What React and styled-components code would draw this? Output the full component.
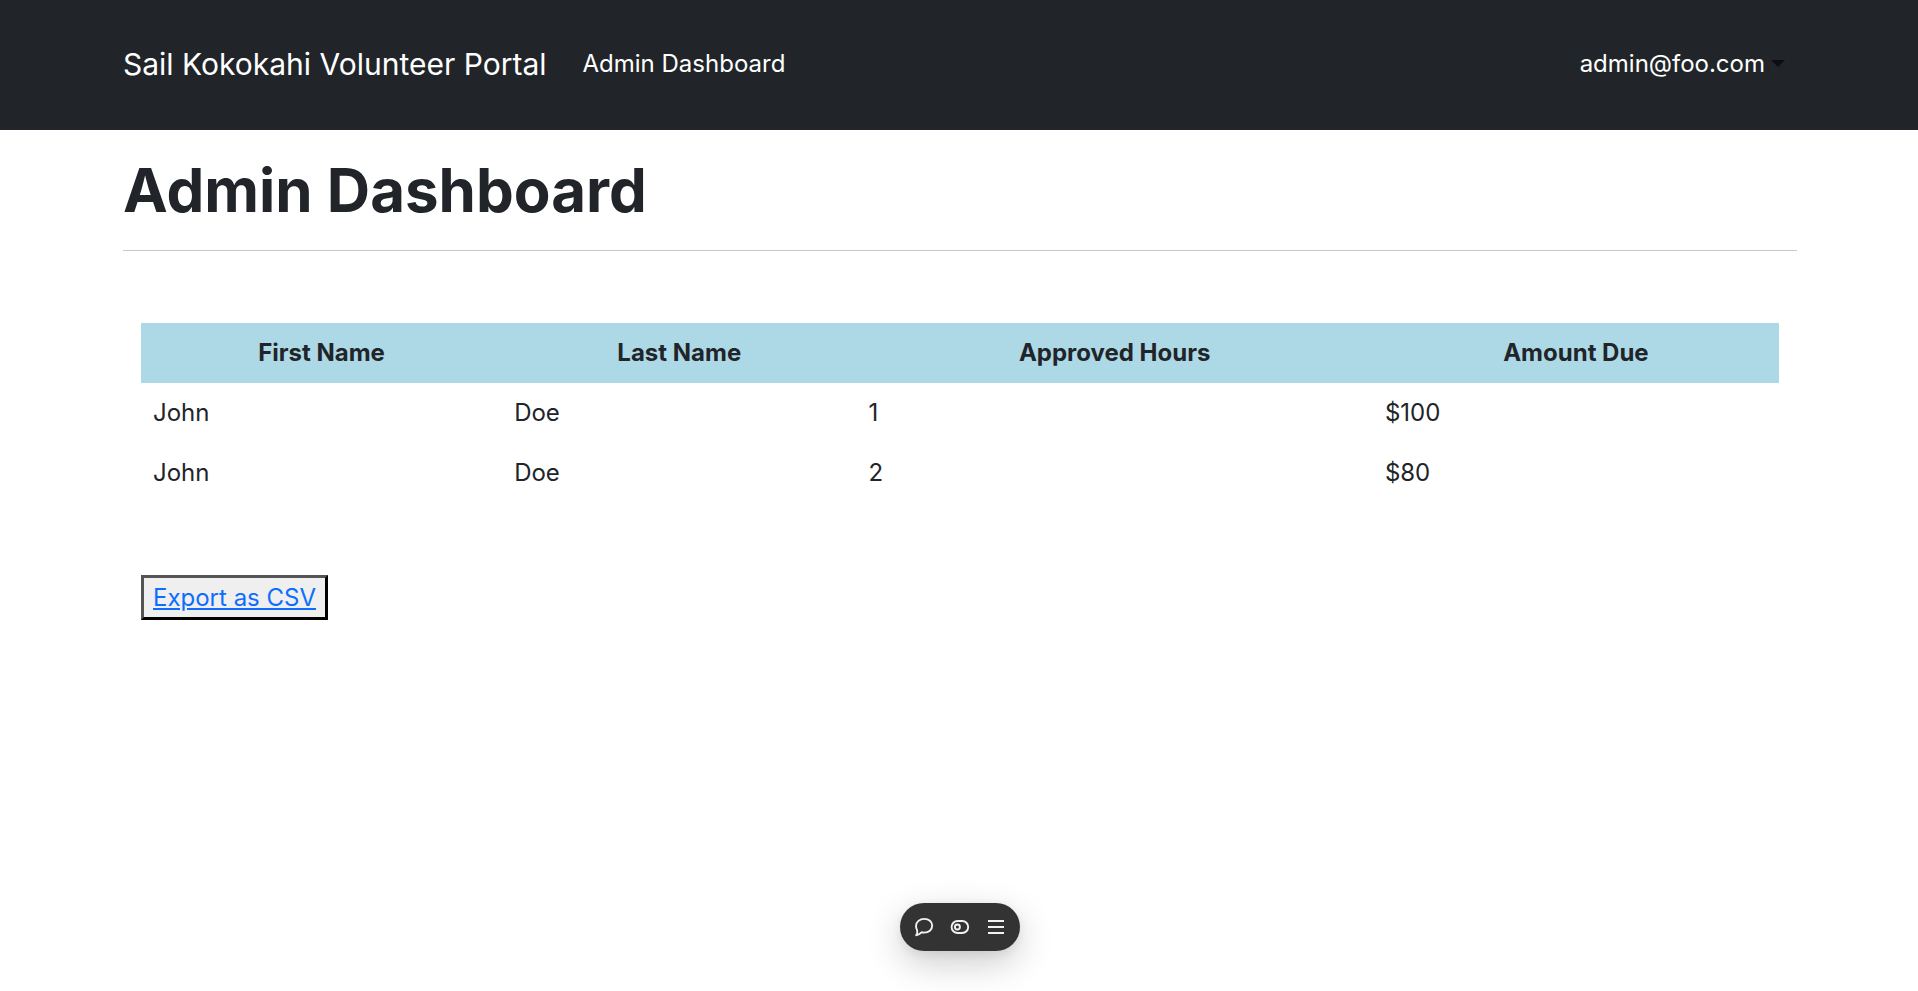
import React from 'react';
import styled, { createGlobalStyle } from 'styled-components';

const GlobalStyle = createGlobalStyle`
  *, *::before, *::after { box-sizing: border-box; }
  body {
    margin: 0;
    background: #fff;
    color: #212529;
    font-family: Inter, "Liberation Sans", sans-serif;
    font-size: 24px;
    line-height: 36px;
  }
`;

const Container = styled.div`
  width: 100%;
  max-width: 1712px;
  margin: 0 auto;
  padding: 0 18px 0 20px;
`;

const Navbar = styled.header`
  background: #212529;
  padding: 36px 0 37px;
`;

const NavRow = styled(Container)`
  display: flex;
  align-items: center;
  min-height: 57px;
`;

const Brand = styled.a`
  margin-right: 24px;
  color: #fff;
  font-size: 30px;
  line-height: 45px;
  text-decoration: none;
  white-space: nowrap;
`;

const NavLinks = styled.nav`
  display: flex;
  flex: 1;
`;

const NavLink = styled.a`
  padding: 0 12px 2px;
  color: #fff;
  text-decoration: none;
`;

const UserMenu = styled.button`
  display: flex;
  align-items: center;
  gap: 6px;
  padding: 0 12px 2px;
  border: 0;
  background: none;
  color: #fff;
  font: inherit;
  cursor: pointer;
`;

const Caret = styled.span`
  border-top: 7px solid #0c0d0e;
  border-right: 7px solid transparent;
  border-left: 7px solid transparent;
`;

const Title = styled.h1`
  margin: 0;
  padding: 24px 0;
  font-size: 60px;
  font-weight: 700;
  line-height: 72px;
`;

const Divider = styled.hr`
  margin: 0;
  border: 0;
  border-top: 1px solid #c7c8c9;
`;

const Report = styled.section`
  padding: 72px 18px;
`;

const Table = styled.table`
  width: 100%;
  border-collapse: collapse;
`;

const HeadCell = styled.th`
  padding: 12px;
  background: #add8e6;
  font-weight: 700;
  text-align: center;
`;

const Cell = styled.td`
  padding: 12px;
`;

const ExportButton = styled.button`
  margin-top: 72px;
  padding: 2px 9px 1px;
  border: 3px outset #000;
  background: #efefef;
  color: #0d6efd;
  font: inherit;
  text-decoration: underline;
  cursor: pointer;
`;

const Toolbar = styled.div`
  position: fixed;
  bottom: 40px;
  left: calc(50% + 1px);
  display: flex;
  align-items: center;
  justify-content: center;
  width: 120px;
  height: 48px;
  border-radius: 24px;
  background: #333;
  box-shadow: 0 12px 36px rgba(0, 0, 0, 0.2), 0 3px 12px rgba(0, 0, 0, 0.08);
  transform: translateX(-50%);
`;

const ToolButton = styled.button`
  display: flex;
  align-items: center;
  justify-content: center;
  width: 36px;
  height: 36px;
  padding: 0;
  border: 0;
  background: none;
  color: #f2f2f2;
  cursor: pointer;
`;

const Icon = ({ children }) => (
  <svg width="24" height="24" viewBox="0 0 24 24" fill="none" stroke="currentColor" strokeWidth="1.9" aria-hidden="true">
    {children}
  </svg>
);

const columns = ['First Name', 'Last Name', 'Approved Hours', 'Amount Due'];
const rows = [
  ['John', 'Doe', '1', '$100'],
  ['John', 'Doe', '2', '$80'],
];

export default function App() {
  return (
    <>
      <GlobalStyle />
      <Navbar>
        <NavRow>
          <Brand href="#">Sail Kokokahi Volunteer Portal</Brand>
          <NavLinks>
            <NavLink href="#admin">Admin Dashboard</NavLink>
          </NavLinks>
          <UserMenu type="button" aria-haspopup="menu">
            admin@foo.com
            <Caret />
          </UserMenu>
        </NavRow>
      </Navbar>
      <Container as="main">
        <Title>Admin Dashboard</Title>
        <Divider />
        <Report>
          <Table>
            <thead>
              <tr>
                {columns.map((name) => (
                  <HeadCell key={name} scope="col">{name}</HeadCell>
                ))}
              </tr>
            </thead>
            <tbody>
              {rows.map((row, r) => (
                <tr key={r}>
                  {row.map((value, c) => (
                    <Cell key={c}>{value}</Cell>
                  ))}
                </tr>
              ))}
            </tbody>
          </Table>
          <ExportButton type="button">Export as CSV</ExportButton>
        </Report>
      </Container>
      <Toolbar role="toolbar" aria-label="Page tools">
        <ToolButton type="button" aria-label="Comments">
          <Icon>
            <path d="M4.2 20.2 C5.4 18.8 5.6 17.4 5.2 15.6 C4.5 14.2 4 12.7 4 11 C4 6.8 7.8 3.9 12.3 3.9 C16.8 3.9 20.2 6.7 20.2 10.6 C20.2 14.8 16.7 17.6 12.3 17.6 C11.3 17.6 10.4 17.5 9.5 17.3 C8 18.9 6.4 20 4.2 20.2 Z" strokeLinejoin="round" />
          </Icon>
        </ToolButton>
        <ToolButton type="button" aria-label="Layout">
          <Icon>
            <rect x="3.6" y="6" width="16.6" height="12" rx="6" />
            <circle cx="9.4" cy="12" r="2.5" />
          </Icon>
        </ToolButton>
        <ToolButton type="button" aria-label="Menu">
          <Icon>
            <path d="M4 6h16M4 12h16M4 18h16" />
          </Icon>
        </ToolButton>
      </Toolbar>
    </>
  );
}
